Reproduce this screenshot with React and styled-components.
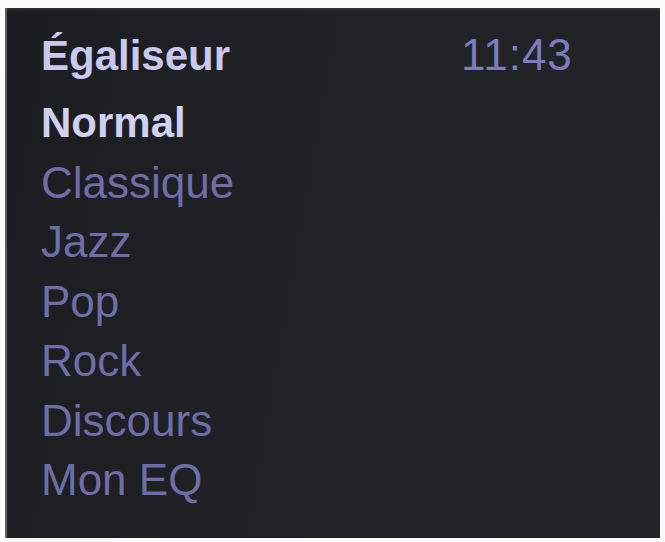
import styled, { createGlobalStyle } from "styled-components";

const GlobalStyle = createGlobalStyle`
  html, body {
    margin: 0;
    background: #fbfbfb;
  }
`;

const Screen = styled.div`
  box-sizing: border-box;
  width: 655px;
  height: 530px;
  margin: 8px 5px 4px 5px;
  padding: 17px 0 0 34px;
  background: linear-gradient(100deg, #1c1d21 0%, #212226 55%, #222327 100%);
  border-left: 2px solid #5e5f63;
  box-shadow: inset 0 2px 2px rgba(255, 255, 255, 0.08);
  font-family: "Liberation Sans", Arial, sans-serif;
`;

const Header = styled.div`
  display: flex;
  align-items: baseline;
  height: 68px;
  line-height: 59px;
`;

const Title = styled.div`
  width: 420px;
  font-size: 42px;
  font-weight: 700;
  color: #cac8ee;
`;

const Clock = styled.div`
  font-size: 44px;
  color: #7d7bbf;
  letter-spacing: 1px;
`;

const List = styled.div`
  display: flex;
  flex-direction: column;
`;

const Item = styled.div`
  height: 59.5px;
  line-height: 59.5px;
  font-size: ${(p) => (p.$active ? "42px" : "44px")};
  font-weight: ${(p) => (p.$active ? 700 : 400)};
  color: ${(p) => (p.$active ? "#d2d0f2" : "#6e6da8")};
`;

const presets = ["Normal", "Classique", "Jazz", "Pop", "Rock", "Discours", "Mon EQ"];

export default function App() {
  return (
    <>
      <GlobalStyle />
      <Screen>
        <Header>
          <Title>Égaliseur</Title>
          <Clock>11:43</Clock>
        </Header>
        <List>
          {presets.map((name, i) => (
            <Item key={name} $active={i === 0}>
              {name}
            </Item>
          ))}
        </List>
      </Screen>
    </>
  );
}
